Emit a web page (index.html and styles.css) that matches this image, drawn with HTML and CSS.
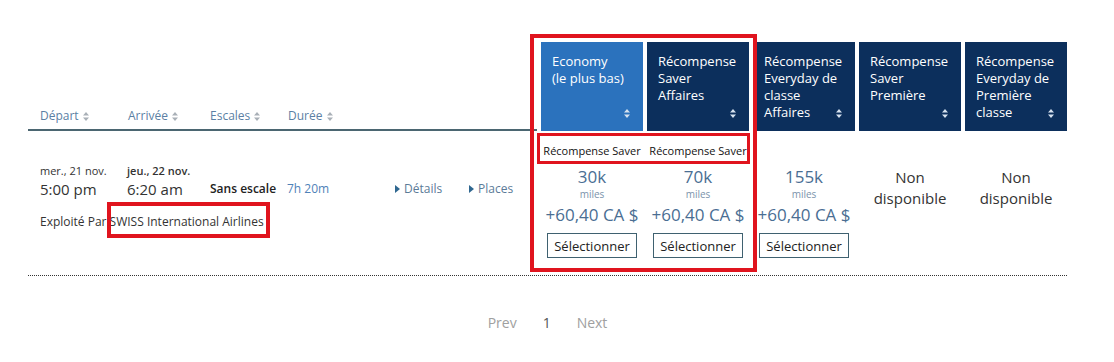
FILE: index.html
```html
<!DOCTYPE html>
<html lang="fr">
<head>
    <meta charset="UTF-8">
    <meta name="viewport" content="width=device-width, initial-scale=1.0">
    <title>Résultats de vol</title>
    <link rel="stylesheet" href="styles.css">
</head>
<body>
    <div class="results">
        <div class="head-row">
            <div class="head-left">
                <span class="sort-label col-dep">Départ <svg class="sort-grey" width="6" height="9" viewBox="0 0 6 9"><path d="M3 0L6 3.5H0z M3 9L0 5.5H6z"/></svg></span>
                <span class="sort-label col-arr">Arrivée <svg class="sort-grey" width="6" height="9" viewBox="0 0 6 9"><path d="M3 0L6 3.5H0z M3 9L0 5.5H6z"/></svg></span>
                <span class="sort-label col-stops">Escales <svg class="sort-grey" width="6" height="9" viewBox="0 0 6 9"><path d="M3 0L6 3.5H0z M3 9L0 5.5H6z"/></svg></span>
                <span class="sort-label">Durée <svg class="sort-grey" width="6" height="9" viewBox="0 0 6 9"><path d="M3 0L6 3.5H0z M3 9L0 5.5H6z"/></svg></span>
            </div>
            <div class="fare-head economy">
                Economy<br>(le plus bas)
                <svg class="sort-white" width="6" height="9" viewBox="0 0 6 9"><path d="M3 0L6 3.5H0z M3 9L0 5.5H6z"/></svg>
            </div>
            <div class="fare-head">
                Récompense<br>Saver<br>Affaires
                <svg class="sort-white" width="6" height="9" viewBox="0 0 6 9"><path d="M3 0L6 3.5H0z M3 9L0 5.5H6z"/></svg>
            </div>
            <div class="fare-head">
                Récompense<br>Everyday de<br>classe<br>Affaires
                <svg class="sort-white" width="6" height="9" viewBox="0 0 6 9"><path d="M3 0L6 3.5H0z M3 9L0 5.5H6z"/></svg>
            </div>
            <div class="fare-head">
                Récompense<br>Saver<br>Première
                <svg class="sort-white" width="6" height="9" viewBox="0 0 6 9"><path d="M3 0L6 3.5H0z M3 9L0 5.5H6z"/></svg>
            </div>
            <div class="fare-head">
                Récompense<br>Everyday de<br>Première<br>classe
                <svg class="sort-white" width="6" height="9" viewBox="0 0 6 9"><path d="M3 0L6 3.5H0z M3 9L0 5.5H6z"/></svg>
            </div>
        </div>

        <div class="flight-row">
            <div class="flight-info">
                <div class="legs">
                    <div class="leg leg-dep">
                        <div class="date">mer., 21 nov.</div>
                        <div class="time">5:00 pm</div>
                    </div>
                    <div class="leg leg-arr">
                        <div class="date date-next">jeu., 22 nov.</div>
                        <div class="time">6:20 am</div>
                    </div>
                    <div class="stops">Sans escale</div>
                    <div class="duration">7h 20m</div>
                    <a class="toggle toggle-details" href="#">Détails</a>
                    <a class="toggle" href="#">Places</a>
                </div>
                <div class="operated">Exploité Par <span class="carrier">SWISS International Airlines</span></div>
            </div>

            <div class="fare-cell">
                <div class="fare-type">Récompense Saver</div>
                <div class="miles">30k</div>
                <div class="miles-unit">miles</div>
                <div class="taxes">+60,40 CA $</div>
                <button class="select-btn">Sélectionner</button>
            </div>
            <div class="fare-cell">
                <div class="fare-type">Récompense Saver</div>
                <div class="miles">70k</div>
                <div class="miles-unit">miles</div>
                <div class="taxes">+60,40 CA $</div>
                <button class="select-btn">Sélectionner</button>
            </div>
            <div class="fare-cell">
                <div class="fare-type"></div>
                <div class="miles">155k</div>
                <div class="miles-unit">miles</div>
                <div class="taxes">+60,40 CA $</div>
                <button class="select-btn">Sélectionner</button>
            </div>
            <div class="fare-cell">
                <div class="fare-type"></div>
                <div class="unavailable">Non<br>disponible</div>
            </div>
            <div class="fare-cell">
                <div class="fare-type"></div>
                <div class="unavailable">Non<br>disponible</div>
            </div>
        </div>

        <div class="pager">
            <span class="pager-link">Prev</span>
            <span class="pager-current">1</span>
            <span class="pager-link">Next</span>
        </div>

        <!-- highlight boxes drawn over the table -->
        <div class="mark mark-fares"></div>
        <div class="mark mark-types"></div>
        <div class="mark mark-carrier"></div>
    </div>
</body>
</html>
```

FILE: styles.css
```css
body {
    margin: 0;
    font-family: 'Open Sans', 'Liberation Sans', sans-serif;
    background-color: white;
    color: #333;
}

.results {
    position: relative;
    width: 1039px;
    margin-left: 28px;
    padding-top: 42px;
}

.head-row,
.flight-row {
    display: grid;
    grid-template-columns: 509px repeat(5, 102px);
    column-gap: 4px;
}

.head-row {
    height: 89px;
}

.head-left {
    display: flex;
    align-items: flex-end;
    padding: 0 0 5px 12px;
    border-bottom: 2px solid #4b6671;
}

.sort-label {
    font-size: 12px;
    line-height: 16px;
    color: #5b7fa4;
    width: 82px;
    white-space: nowrap;
}

.col-dep {
    width: 88px;
}

.col-arr {
    width: 82px;
}

.col-stops {
    width: 78px;
}

.sort-grey {
    fill: #a9b0b7;
    margin-left: 1px;
    vertical-align: -1px;
}

.fare-head {
    position: relative;
    background-color: #0c2f5c;
    color: white;
    font-size: 13px;
    line-height: 17px;
    padding: 11px 6px 0 11px;
}

.fare-head.economy {
    background-color: #2b72bd;
}

.sort-white {
    position: absolute;
    right: 13px;
    bottom: 13px;
    fill: #d6e2ef;
}

.flight-row {
    height: 144px;
    border-bottom: 1px dotted #333;
}

.flight-info {
    padding: 33px 0 0 12px;
}

.legs {
    display: flex;
    align-items: flex-end;
}

.legs > * {
    flex-shrink: 0;
}

.leg-dep {
    width: 87px;
}

.leg-arr {
    width: 83px;
}

.date {
    font-size: 11px;
    line-height: 14px;
    color: #333;
}

.date-next {
    font-weight: 600;
    color: #333;
}

.time {
    font-size: 15px;
    line-height: 22px;
    color: #333;
}

.stops {
    width: 77px;
    font-size: 12px;
    font-weight: 600;
    line-height: 22px;
    color: #222;
}

.duration {
    width: 108px;
    font-size: 12px;
    line-height: 22px;
    color: #4f82b8;
}

.toggle {
    font-size: 12px;
    line-height: 22px;
    color: #5b7b98;
    text-decoration: none;
}

.toggle-details {
    width: 74px;
}

.toggle::before {
    content: "";
    display: inline-block;
    border-left: 5px solid #2f6790;
    border-top: 4px solid transparent;
    border-bottom: 4px solid transparent;
    margin-right: 4px;
    vertical-align: 0;
}

.operated {
    margin-top: 14px;
    font-size: 12px;
    line-height: 16px;
    color: #333;
}

.fare-cell {
    display: flex;
    flex-direction: column;
    align-items: center;
    padding-top: 12px;
    white-space: nowrap;
}

.fare-type {
    height: 16px;
    font-size: 11px;
    line-height: 16px;
    color: #111;
}

.miles {
    margin-top: 8px;
    font-size: 17px;
    line-height: 20px;
    color: #4a6e93;
}

.miles-unit {
    margin-top: 1px;
    font-size: 10px;
    line-height: 12px;
    color: #7b93ab;
}

.taxes {
    margin-top: 4px;
    font-size: 17px;
    line-height: 22px;
    color: #4a6e93;
}

.select-btn {
    margin-top: 7px;
    height: 25px;
    padding: 0 6px;
    border: 1px solid #3f6170;
    border-radius: 0;
    background-color: white;
    font-family: 'Open Sans', 'Liberation Sans', sans-serif;
    font-size: 13px;
    color: #222;
    cursor: pointer;
}

.unavailable {
    margin-top: 8px;
    font-size: 15px;
    line-height: 21px;
    color: #333;
    text-align: center;
}

.pager {
    display: flex;
    justify-content: center;
    gap: 26px;
    margin-top: 37px;
    font-size: 14px;
    line-height: 20px;
}

.pager-link {
    color: #a0a0a0;
}

.pager-current {
    color: #555;
}

.mark {
    position: absolute;
    box-sizing: border-box;
    border: 3px solid #e0141e;
}

.mark-fares {
    left: 502px;
    top: 34px;
    width: 227px;
    height: 238px;
    border-width: 4px;
}

.mark-types {
    left: 509px;
    top: 133px;
    width: 213px;
    height: 31px;
}

.mark-carrier {
    left: 79px;
    top: 202px;
    width: 163px;
    height: 36px;
    border-width: 4px;
}
```
